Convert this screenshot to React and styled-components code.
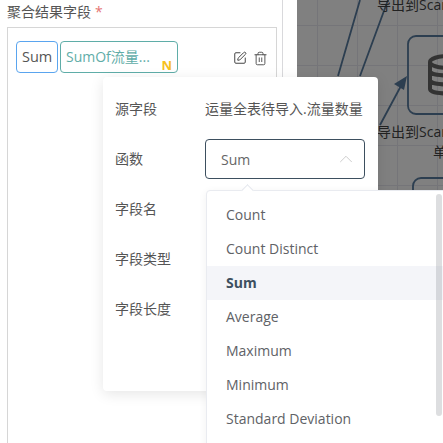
import React from 'react';
import styled, { createGlobalStyle } from 'styled-components';
import { SquarePen, Trash2, ChevronUp } from 'lucide-react';

const GlobalStyle = createGlobalStyle`
  html, body {
    margin: 0;
    padding: 0;
    background: #fff;
  }
  body {
    font-family: "Open Sans", "Noto Sans CJK SC", sans-serif;
    font-size: 14px;
    color: #555;
  }
`;

const Page = styled.div`
  position: relative;
  width: 443px;
  height: 443px;
  overflow: hidden;
  display: flex;
`;

const SidePanel = styled.div`
  width: 275px;
  flex: none;
  border-right: 1px solid #d9d9dc;
  padding-left: 7px;
  box-sizing: content-box;
`;

const FieldLabel = styled.div`
  height: 27px;
  line-height: 23px;
  color: #555;
  & > em {
    color: #e57373;
    font-style: normal;
    margin-left: 4px;
  }
`;

const ResultBox = styled.div`
  width: 270px;
  height: 416px;
  border: 1px solid #d6d6d6;
  border-bottom: none;
  padding: 13px 8px;
  box-sizing: border-box;
  display: flex;
  align-items: flex-start;
`;

const Tag = styled.div`
  position: relative;
  height: 32px;
  line-height: 30px;
  padding: 0 5px;
  width: ${p => (p.$teal ? '118px' : '42px')};
  margin-right: 2px;
  box-sizing: border-box;
  white-space: nowrap;
  overflow: hidden;
  border: 1px solid ${p => (p.$teal ? '#5fada8' : '#5aa5ef')};
  border-radius: 4px;
  color: ${p => (p.$teal ? '#5fada8' : '#555')};
  font-size: ${p => (p.$teal ? '14px' : '14.5px')};
`;

const Badge = styled.span`
  position: absolute;
  right: 5px;
  bottom: 0;
  line-height: 1;
  color: #f6c11f;
  font-size: 13px;
  font-weight: 700;
`;

const RowIcons = styled.div`
  margin-left: auto;
  display: flex;
  gap: 6px;
  padding-top: 10px;
  color: #444;
`;

const Canvas = styled.div`
  position: relative;
  margin-left: 14px;
  flex: 1;
  background-color: #808080;
  background-image:
    linear-gradient(#757579 1px, transparent 1px),
    linear-gradient(90deg, #757579 1px, transparent 1px);
  background-size: 40px 40px;
  background-position: 20px 25px;
`;

const CanvasText = styled.div`
  position: absolute;
  left: ${p => p.$x}px;
  top: ${p => p.$y}px;
  white-space: nowrap;
  color: #222;
  line-height: 20px;
`;

const CanvasArt = styled.svg`
  position: absolute;
  left: 0;
  top: 0;
`;

const Popover = styled.div`
  position: absolute;
  left: 103px;
  top: 77px;
  width: 275px;
  height: 314px;
  padding: 7px 12px;
  box-sizing: border-box;
  background: #fff;
  border-radius: 4px;
  box-shadow: 0 3px 14px rgba(0, 0, 0, 0.1);
`;

const FormRow = styled.div`
  display: flex;
  align-items: center;
  height: 50px;
`;

const RowLabel = styled.div`
  width: 90px;
  flex: none;
  margin-top: -2px;
`;

const RowValue = styled.span`
  margin-top: -2px;
`;

const SelectBox = styled.div`
  width: 160px;
  height: 40px;
  padding: 0 15px;
  box-sizing: border-box;
  display: flex;
  align-items: center;
  justify-content: space-between;
  border: 1px solid #3d4f5f;
  border-radius: 4px;
  color: #666;
  font-size: 14px;
  & > svg {
    color: #c8c8c8;
    margin-right: -8px;
  }
`;

const Dropdown = styled.div`
  position: absolute;
  left: 206px;
  top: 190px;
  width: 240px;
  height: 260px;
  padding-top: 7px;
  box-sizing: border-box;
  background: #fff;
  border: 1px solid #e9ebf0;
  border-radius: 4px 0 0 0;
  box-shadow: 0 2px 8px rgba(0, 0, 0, 0.06);
  &::before {
    content: '';
    position: absolute;
    left: 36px;
    top: -5px;
    width: 8px;
    height: 8px;
    background: #fff;
    border-top: 1px solid #e4e7ed;
    border-left: 1px solid #e4e7ed;
    transform: rotate(45deg);
  }
`;

const Option = styled.div`
  height: 34px;
  line-height: 34px;
  padding-left: 19px;
  color: ${p => (p.$active ? '#3d4f5f' : '#606266')};
  font-weight: ${p => (p.$active ? 700 : 400)};
  background: ${p => (p.$active ? '#f4f5f9' : 'transparent')};
`;

const ScrollThumb = styled.div`
  position: absolute;
  left: 229px;
  top: 3px;
  width: 6px;
  height: 222px;
  border-radius: 3px;
  background: rgba(144, 147, 153, 0.3);
`;

const options = ['Count', 'Count Distinct', 'Sum', 'Average', 'Maximum', 'Minimum', 'Standard Deviation'];

export default function App() {
  return (
    <>
      <GlobalStyle />
      <Page>
        <SidePanel>
          <FieldLabel>聚合结果字段<em>*</em></FieldLabel>
          <ResultBox>
            <Tag>Sum</Tag>
            <Tag $teal>
              SumOf流量...
              <Badge>N</Badge>
            </Tag>
            <RowIcons>
              <SquarePen size={14} strokeWidth={1.7} />
              <Trash2 size={15} strokeWidth={1.4} />
            </RowIcons>
          </ResultBox>
        </SidePanel>
        <Canvas>
          <CanvasArt width="146" height="443" viewBox="0 0 146 443">
            <path d="M63 0L41 76M91 0L63 76" stroke="#2c3e50" strokeWidth="1.8" fill="none" />
            <path d="M83 125L105 84" stroke="#2c3e50" strokeWidth="1.8" fill="none" />
            <path d="M110 76L107 90L97 84Z" fill="#2c3e50" />
            <rect x="111" y="36" width="60" height="78" rx="8" fill="none" stroke="#2c3e50" strokeWidth="1.8" />
            <g fill="none" stroke="#333" strokeWidth="4">
              <ellipse cx="151" cy="62" rx="18" ry="6" />
              <path d="M133 62V89C133 95 169 95 169 89V62M133 71C133 77 169 77 169 71M133 80C133 86 169 86 169 80" />
            </g>
            <rect x="116" y="178" width="60" height="60" rx="8" fill="none" stroke="#2c3e50" strokeWidth="1.8" />
          </CanvasArt>
          <CanvasText $x={80} $y={-5}>导出到Scan</CanvasText>
          <CanvasText $x={80} $y={122}>导出到Scan</CanvasText>
          <CanvasText $x={136} $y={142}>单</CanvasText>
        </Canvas>
        <Popover>
          <FormRow>
            <RowLabel>源字段</RowLabel>
            <RowValue>运量全表待导入.流量数量</RowValue>
          </FormRow>
          <FormRow>
            <RowLabel>函数</RowLabel>
            <SelectBox>
              Sum
              <ChevronUp size={22} strokeWidth={1} />
            </SelectBox>
          </FormRow>
          <FormRow><RowLabel>字段名</RowLabel></FormRow>
          <FormRow><RowLabel>字段类型</RowLabel></FormRow>
          <FormRow><RowLabel>字段长度</RowLabel></FormRow>
        </Popover>
        <Dropdown>
          {options.map(o => (
            <Option key={o} $active={o === 'Sum'}>{o}</Option>
          ))}
          <ScrollThumb />
        </Dropdown>
      </Page>
    </>
  );
}
